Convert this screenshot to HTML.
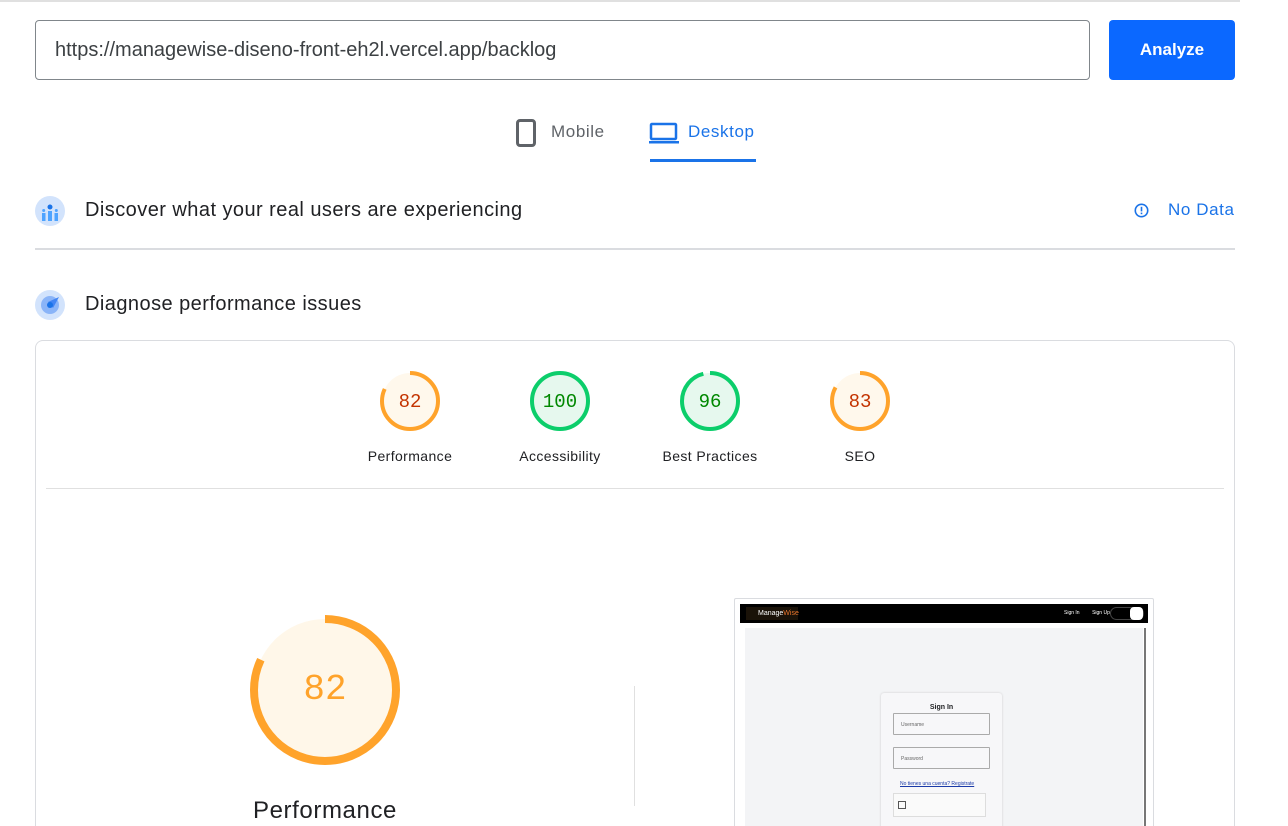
<!DOCTYPE html>
<html style="height:826px;overflow:hidden"><head><meta charset="utf-8"><style>
*{box-sizing:border-box;margin:0;padding:0}
body{width:1288px;height:826px;overflow:hidden;background:#fff;font-family:"Liberation Sans",Arial,sans-serif;position:relative;color:#202124}
.abs{position:absolute}
.topline{left:0;top:0;width:1240px;height:2px;background:#e0e0e0}
.url{left:35px;top:20px;width:1055px;height:60px;border:1px solid #80868b;border-radius:4px;font-size:20px;color:#3c4043;padding:18px 0 0 19px}
.btn{left:1109px;top:20px;width:126px;height:60px;background:#0b68ff;border-radius:4px;color:#fff;font-weight:bold;font-size:17px;text-align:center;line-height:60px}
.tab{font-size:17px;top:122px;letter-spacing:.6px}
.lbl{font-size:14px;width:120px;text-align:center;top:448px;letter-spacing:.4px}
.h{font-size:20px;letter-spacing:.45px}
</style></head><body>
<div class="abs topline"></div>
<div class="abs url">https://managewise-diseno-front-eh2l.vercel.app/backlog</div>
<div class="abs btn">Analyze</div>

<svg class="abs" style="left:516px;top:119px" width="20" height="28"><rect x="1.5" y="1.5" width="17" height="25" rx="2.5" fill="none" stroke="#5f6368" stroke-width="3"/></svg>
<div class="abs tab" style="left:551px;color:#5f6368">Mobile</div>
<svg class="abs" style="left:649px;top:122px" width="30" height="22"><rect x="2" y="2" width="25" height="15" rx="1" fill="none" stroke="#1a73e8" stroke-width="2.5"/><rect x="0" y="19" width="30" height="2.5" fill="#1a73e8"/></svg>
<div class="abs tab" style="left:688px;color:#1a73e8">Desktop</div>
<div class="abs" style="left:650px;top:159px;width:106px;height:3px;background:#1a73e8"></div>

<svg class="abs" style="left:35px;top:196px" width="30" height="30"><circle cx="15" cy="15" r="15" fill="#d2e3fc"/><circle cx="15" cy="11" r="2.5" fill="#1a73e8"/><rect x="13" y="15" width="4" height="10" fill="#4da3ff"/><rect x="7" y="17" width="3.5" height="8" fill="#4da3ff"/><rect x="19.5" y="17" width="3.5" height="8" fill="#4da3ff"/><circle cx="8.7" cy="14.5" r="1.5" fill="#4da3ff"/><circle cx="21.3" cy="14.5" r="1.5" fill="#4da3ff"/></svg>
<div class="abs h" style="left:85px;top:199px">Discover what your real users are experiencing</div>
<svg class="abs" style="left:1134px;top:203px" width="15" height="15"><circle cx="7.5" cy="7.5" r="6.2" fill="none" stroke="#1a73e8" stroke-width="1.6"/><rect x="6.7" y="3.8" width="1.6" height="4.6" fill="#1a73e8"/><rect x="6.7" y="9.6" width="1.6" height="1.6" fill="#1a73e8"/></svg>
<div class="abs" style="left:1168px;top:200px;font-size:17px;color:#1a73e8;letter-spacing:.6px">No Data</div>
<div class="abs" style="left:35px;top:248px;width:1200px;height:2px;background:#dadce0"></div>

<svg class="abs" style="left:35px;top:290px" width="30" height="30"><circle cx="15" cy="15" r="15" fill="#d2e3fc"/><circle cx="15" cy="15" r="9" fill="#8ab4f8"/><path d="M13 12 L24 7 L18 18Z" fill="#4285f4"/><circle cx="15" cy="15" r="3" fill="#1a73e8"/></svg>
<div class="abs h" style="left:85px;top:293px">Diagnose performance issues</div>

<div class="abs" style="left:35px;top:340px;width:1200px;height:486px;border:1px solid #dadce0;border-bottom:none;border-radius:8px 8px 0 0"></div>
<div class="abs" style="left:46px;top:488px;width:1178px;height:1px;background:#e0e0e0"></div>

<svg class="abs" style="left:380px;top:371px" width="60" height="60"><circle cx="30" cy="30" r="28" fill="#fff3e0" fill-opacity=".6" stroke="none"/><circle cx="30" cy="30" r="28" fill="none" stroke="#ffa32b" stroke-width="4" stroke-dasharray="144.2 200" transform="rotate(-90 30 30)"/><text x="30" y="36" text-anchor="middle" font-family="Liberation Mono,monospace" font-size="19" fill="#c33300">82</text></svg>
<div class="abs lbl" style="left:350px">Performance</div>
<svg class="abs" style="left:530px;top:371px" width="60" height="60"><circle cx="30" cy="30" r="28" fill="#e6f8ee" stroke="#0cce6b" stroke-width="4"/><text x="30" y="36" text-anchor="middle" font-family="Liberation Mono,monospace" font-size="19" fill="#008800">100</text></svg>
<div class="abs lbl" style="left:500px">Accessibility</div>
<svg class="abs" style="left:680px;top:371px" width="60" height="60"><circle cx="30" cy="30" r="28" fill="#e6f8ee"/><circle cx="30" cy="30" r="28" fill="none" stroke="#0cce6b" stroke-width="4" stroke-dasharray="168.9 200" transform="rotate(-90 30 30)"/><text x="30" y="36" text-anchor="middle" font-family="Liberation Mono,monospace" font-size="19" fill="#008800">96</text></svg>
<div class="abs lbl" style="left:650px">Best Practices</div>
<svg class="abs" style="left:830px;top:371px" width="60" height="60"><circle cx="30" cy="30" r="28" fill="#fff3e0" fill-opacity=".6"/><circle cx="30" cy="30" r="28" fill="none" stroke="#ffa32b" stroke-width="4" stroke-dasharray="146 200" transform="rotate(-90 30 30)"/><text x="30" y="36" text-anchor="middle" font-family="Liberation Mono,monospace" font-size="19" fill="#c33300">83</text></svg>
<div class="abs lbl" style="left:800px">SEO</div>

<svg class="abs" style="left:249px;top:614px" width="152" height="152"><circle cx="76" cy="76" r="71" fill="#fff3e0" fill-opacity=".7"/><circle cx="76" cy="76" r="71" fill="none" stroke="#ffa32b" stroke-width="8" stroke-dasharray="365.8 500" transform="rotate(-90 76 76)"/><text x="76" y="85" text-anchor="middle" font-family="Liberation Mono,monospace" font-size="36" fill="#ffa32b">82</text></svg>
<div class="abs" style="left:225px;top:797px;width:200px;text-align:center;font-size:24px;letter-spacing:.6px">Performance</div>
<div class="abs" style="left:634px;top:686px;width:1px;height:120px;background:#e0e0e0"></div>

<div class="abs" style="left:734px;top:598px;width:420px;height:240px;border:1px solid #dadce0;border-radius:2px"></div>
<div class="abs" style="left:740px;top:604px;width:408px;height:19px;background:#000"></div>
<div class="abs" style="left:746px;top:607px;width:52px;height:13px;background:#1a1208;font-size:7px;color:#fff;padding:3px 0 0 12px">Manage<span style="color:#e8742c">Wise</span></div>
<div class="abs" style="left:1064px;top:610px;font-size:5px;color:#fff">Sign In &nbsp;&nbsp;&nbsp;&nbsp;&nbsp;&nbsp;&nbsp; Sign Up</div>
<div class="abs" style="left:1110px;top:607px;width:34px;height:13px;border-radius:7px;border:1px solid #444;background:#000"></div>
<div class="abs" style="left:1130px;top:607px;width:13px;height:13px;border-radius:4px;background:#fff"></div>
<div class="abs" style="left:745px;top:628px;width:398px;height:200px;background:#f3f4f6"></div>
<div class="abs" style="left:1144px;top:628px;width:2px;height:200px;background:#777"></div>
<div class="abs" style="left:881px;top:693px;width:121px;height:140px;background:#f7f7f9;border-radius:3px;box-shadow:0 0 2px #ccc"></div>
<div class="abs" style="left:881px;top:704px;width:121px;text-align:center;font-size:7px;font-weight:bold">Sign In</div>
<div class="abs" style="left:893px;top:713px;width:97px;height:22px;border:1px solid #aaa;border-radius:1px;font-size:5px;color:#666;padding:8px 0 0 7px">Username</div>
<div class="abs" style="left:893px;top:747px;width:97px;height:22px;border:1px solid #aaa;border-radius:1px;font-size:5px;color:#666;padding:8px 0 0 7px">Password</div>
<div class="abs" style="left:900px;top:781px;font-size:5px;color:#1a3aa8;text-decoration:underline">No tienes una cuenta? Registrate</div>
<div class="abs" style="left:893px;top:793px;width:93px;height:24px;border:1px solid #ddd;background:#fafafa"></div>
<div class="abs" style="left:898px;top:801px;width:8px;height:8px;border:1px solid #555"></div>
</body></html>
